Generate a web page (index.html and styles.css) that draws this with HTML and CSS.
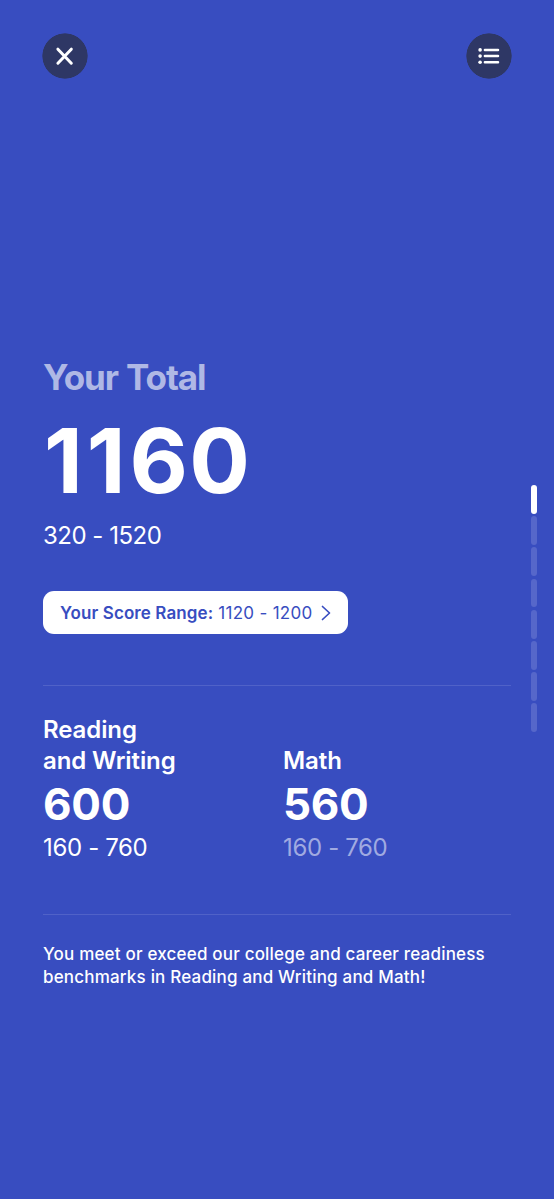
FILE: index.html
```html
<!DOCTYPE html>
<html lang="en">
<head>
<meta charset="utf-8">
<title>Your Total</title>
<link rel="stylesheet" href="styles.css">
</head>
<body>
<main class="screen">
  <header class="top">
    <button class="round" aria-label="Close"><svg width="46" height="46" viewBox="0 0 46 46"><path d="M15.900 16.200 29.300 30.200M29.300 16.200 15.900 30.200" /></svg></button>
    <button class="round list" aria-label="List"><svg width="46" height="46" viewBox="0 0 46 46"><path d="M18.900 16.900H32M18.900 23.100H32M18.900 29.300H32" /><g class="dots"><circle cx="14.100" cy="16.900" r="1.800"/><circle cx="14.100" cy="23.100" r="1.800"/><circle cx="14.100" cy="29.300" r="1.800"/></g></svg></button>
  </header>
  <section class="total">
    <h1 class="label">Your Total</h1>
    <div class="score"><span class="ones">11</span>60</div>
    <div class="scale">320 - 1520</div>
    <button class="range"><b>Your Score Range:</b><span class="values">1120 - 1200</span><svg width="10" height="16" viewBox="0 0 10 16"><path d="M1.500 1.500 8.500 8 1.500 14.500"/></svg></button>
  </section>
  <section class="parts">
    <div class="part">
      <h2 class="name">Reading<br>and Writing</h2>
      <div class="points">600</div>
      <div class="limits">160 - 760</div>
    </div>
    <div class="part">
      <h2 class="name">Math</h2>
      <div class="points">560</div>
      <div class="limits dim">160 - 760</div>
    </div>
  </section>
  <p class="note">You meet or exceed our college and career readiness<br>benchmarks in Reading and Writing and Math!</p>
  <nav class="pager"><i class="on"></i><i></i><i></i><i></i><i></i><i></i><i></i><i></i></nav>
</main>
</body>
</html>
```
FILE: styles.css
```css
* { box-sizing: border-box; }
body { margin: 0; background: #384dc0; color: #fff; font-family: Inter, sans-serif; }
button { border: 0; padding: 0; font: inherit; }
h1, h2, p { margin: 0; }
svg { display: block; fill: none; stroke: #fff; stroke-linecap: round; stroke-linejoin: round; }
.screen { position: relative; height: 1199px; padding: 33px 43px 0; overflow: hidden; }
.top { display: flex; justify-content: space-between; height: 46px; margin: 0 -1px; }
.round { width: 46px; height: 46px; border-radius: 50%; background: radial-gradient(circle, #2e3765 22.3px, transparent 23px); }
.round svg { stroke-width: 3; }
.list svg { stroke-width: 2.5; }
.round .dots { fill: #fff; stroke: none; }
.total { height: 606px; padding-top: 275px; }
.label { height: 46px; line-height: 46px; font-size: 35px; font-weight: 700; letter-spacing: -1.1px; word-spacing: 1px; color: #afb8e5; }
.score { height: 120px; line-height: 121px; margin-left: 1px; font-size: 90px; font-weight: 700; letter-spacing: 1.2px; }
.ones { letter-spacing: 4px; }
.scale { height: 32px; line-height: 31px; font-size: 24px; letter-spacing: -0.5px; }
.range { display: flex; align-items: center; width: 305px; height: 43px; margin-top: 39px; padding-left: 17px; border-radius: 11px; background: #fff; color: #384dc0; font-size: 17px; white-space: nowrap; }
.range b { font-weight: 600; letter-spacing: 0.1px; }
.values { margin-left: 5px; letter-spacing: 0.3px; }
.range svg { margin-left: 8px; stroke: #384dc0; stroke-width: 1.7; }
.parts { display: grid; grid-template-columns: 240px 1fr; align-items: end; height: 230px; padding-bottom: 50px; border: solid #5062c8; border-width: 1px 0; }
.name { font-size: 24px; line-height: 31px; font-weight: 600; letter-spacing: -0.1px; }
.points { height: 56px; line-height: 56px; font-size: 44px; font-weight: 700; letter-spacing: -0.3px; }
.limits { height: 32px; line-height: 32px; font-size: 24px; letter-spacing: -0.35px; }
.dim { color: #a0aae1; }
.note { padding-top: 28px; font-size: 17px; line-height: 23px; font-weight: 500; letter-spacing: 0.19px; white-space: nowrap; }
.pager { position: absolute; left: 531px; top: 485px; display: grid; gap: 2.3px; }
.pager i { width: 6px; height: 28.9px; border-radius: 3px; background: #5667ca; }
.pager .on { background: #fff; }
```
